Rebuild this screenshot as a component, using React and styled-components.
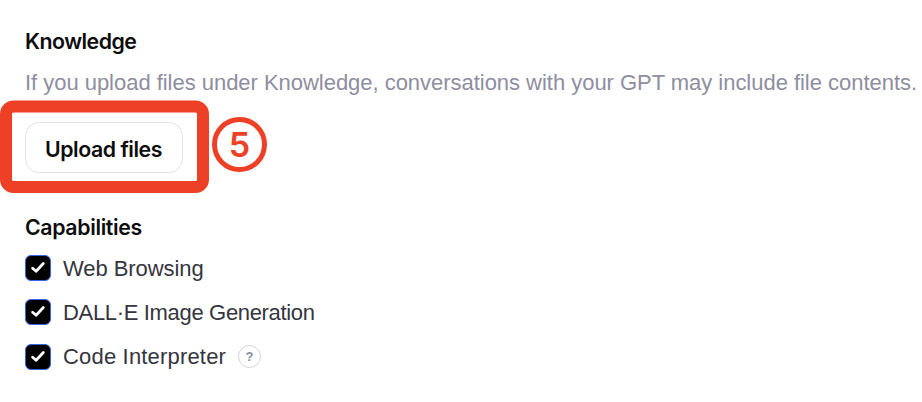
import React from 'react';
import styled, { createGlobalStyle } from 'styled-components';

const GlobalStyle = createGlobalStyle`
  * {
    box-sizing: border-box;
  }
  body {
    margin: 0;
    background: #fff;
    font-family: "Liberation Sans", Arial, sans-serif;
  }
`;

const Panel = styled.main`
  display: flex;
  flex-direction: column;
  align-items: flex-start;
  height: 402px;
  padding: 27px 0 0 25px;
  overflow: hidden;
`;

const Heading = styled.h2`
  margin: 0;
  font-family: Inter, sans-serif;
  font-size: 21.3px;
  font-weight: 600;
  line-height: 28px;
  letter-spacing: ${(props) => props.$spacing};
  color: #0d0d0d;
`;

const Hint = styled.p`
  margin: 14px 0 0;
  font-size: 22px;
  line-height: 28px;
  letter-spacing: -0.03px;
  white-space: nowrap;
  color: #8e8ea0;
`;

const UploadArea = styled.div`
  position: relative;
  margin: 25px 0 40px;
`;

const UploadButton = styled.button`
  display: block;
  width: 158px;
  height: 51px;
  padding: 2px 1px 0 0;
  border: 1.5px solid #e3e3e3;
  border-radius: 14px;
  background: #fff;
  color: #0d0d0d;
  font-family: Inter, sans-serif;
  font-size: 21.3px;
  font-weight: 600;
  letter-spacing: -0.47px;
  white-space: nowrap;
`;

const Frame = styled.svg`
  position: absolute;
  top: -22px;
  left: -25px;
`;

const Step = styled.div`
  position: absolute;
  top: -5px;
  left: 187px;
  display: flex;
  align-items: center;
  justify-content: center;
  width: 55px;
  height: 55px;
  border: 5px solid #ee4026;
  border-radius: 50%;
  color: #ee4026;
  font-family: Inter, sans-serif;
  font-size: 34px;
  font-weight: 600;
  line-height: 1;
`;

const List = styled.div`
  display: grid;
  gap: 18.4px;
  margin-top: 14px;
`;

const Option = styled.label`
  display: flex;
  align-items: center;
  height: 26px;
  white-space: nowrap;
  color: #353540;
`;

const Name = styled.span`
  padding-top: 1px;
  font-size: 22px;
  line-height: 26px;
  letter-spacing: ${(props) => props.$spacing};
`;

const Box = styled.span`
  display: flex;
  flex: none;
  width: 26px;
  height: 26px;
  margin-right: 12px;
  border: 1px solid #3566e8;
  border-radius: 6px;
  background: #000;
`;

const Help = styled.span`
  display: flex;
  align-items: center;
  justify-content: center;
  width: 23px;
  height: 23px;
  margin-left: 12px;
  border: 1.5px solid #d4d4d8;
  border-radius: 50%;
  color: #8e8ea0;
  font-size: 13px;
  font-weight: 700;
  line-height: 1;
`;

const capabilities = [
  { name: 'Web Browsing', spacing: '-0.07px' },
  { name: 'DALL·E Image Generation', spacing: '-0.33px' },
  { name: 'Code Interpreter', spacing: '0.18px', help: true },
];

const Check = () => (
  <Box>
    <svg width="24" height="24" viewBox="0 0 24 24" fill="none">
      <path d="M6.6 12.2L10.1 15.2L17.3 7.5" stroke="#fff" strokeWidth="2.8" strokeLinecap="round" strokeLinejoin="round" />
    </svg>
  </Box>
);

export default function App() {
  return (
    <>
      <GlobalStyle />
      <Panel>
        <Heading $spacing="-0.5px">Knowledge</Heading>
        <Hint>If you upload files under Knowledge, conversations with your GPT may include file contents.</Hint>
        <UploadArea>
          <UploadButton type="button">Upload files</UploadButton>
          <Frame width="210" height="94" fill="none">
            <rect x="6" y="6.5" width="197" height="80.5" rx="7.5" stroke="#ee4026" strokeWidth="12" />
          </Frame>
          <Step>5</Step>
        </UploadArea>
        <Heading $spacing="-0.35px">Capabilities</Heading>
        <List>
          {capabilities.map((item) => (
            <Option key={item.name}>
              <Check />
              <Name $spacing={item.spacing}>{item.name}</Name>
              {item.help && <Help>?</Help>}
            </Option>
          ))}
        </List>
      </Panel>
    </>
  );
}
